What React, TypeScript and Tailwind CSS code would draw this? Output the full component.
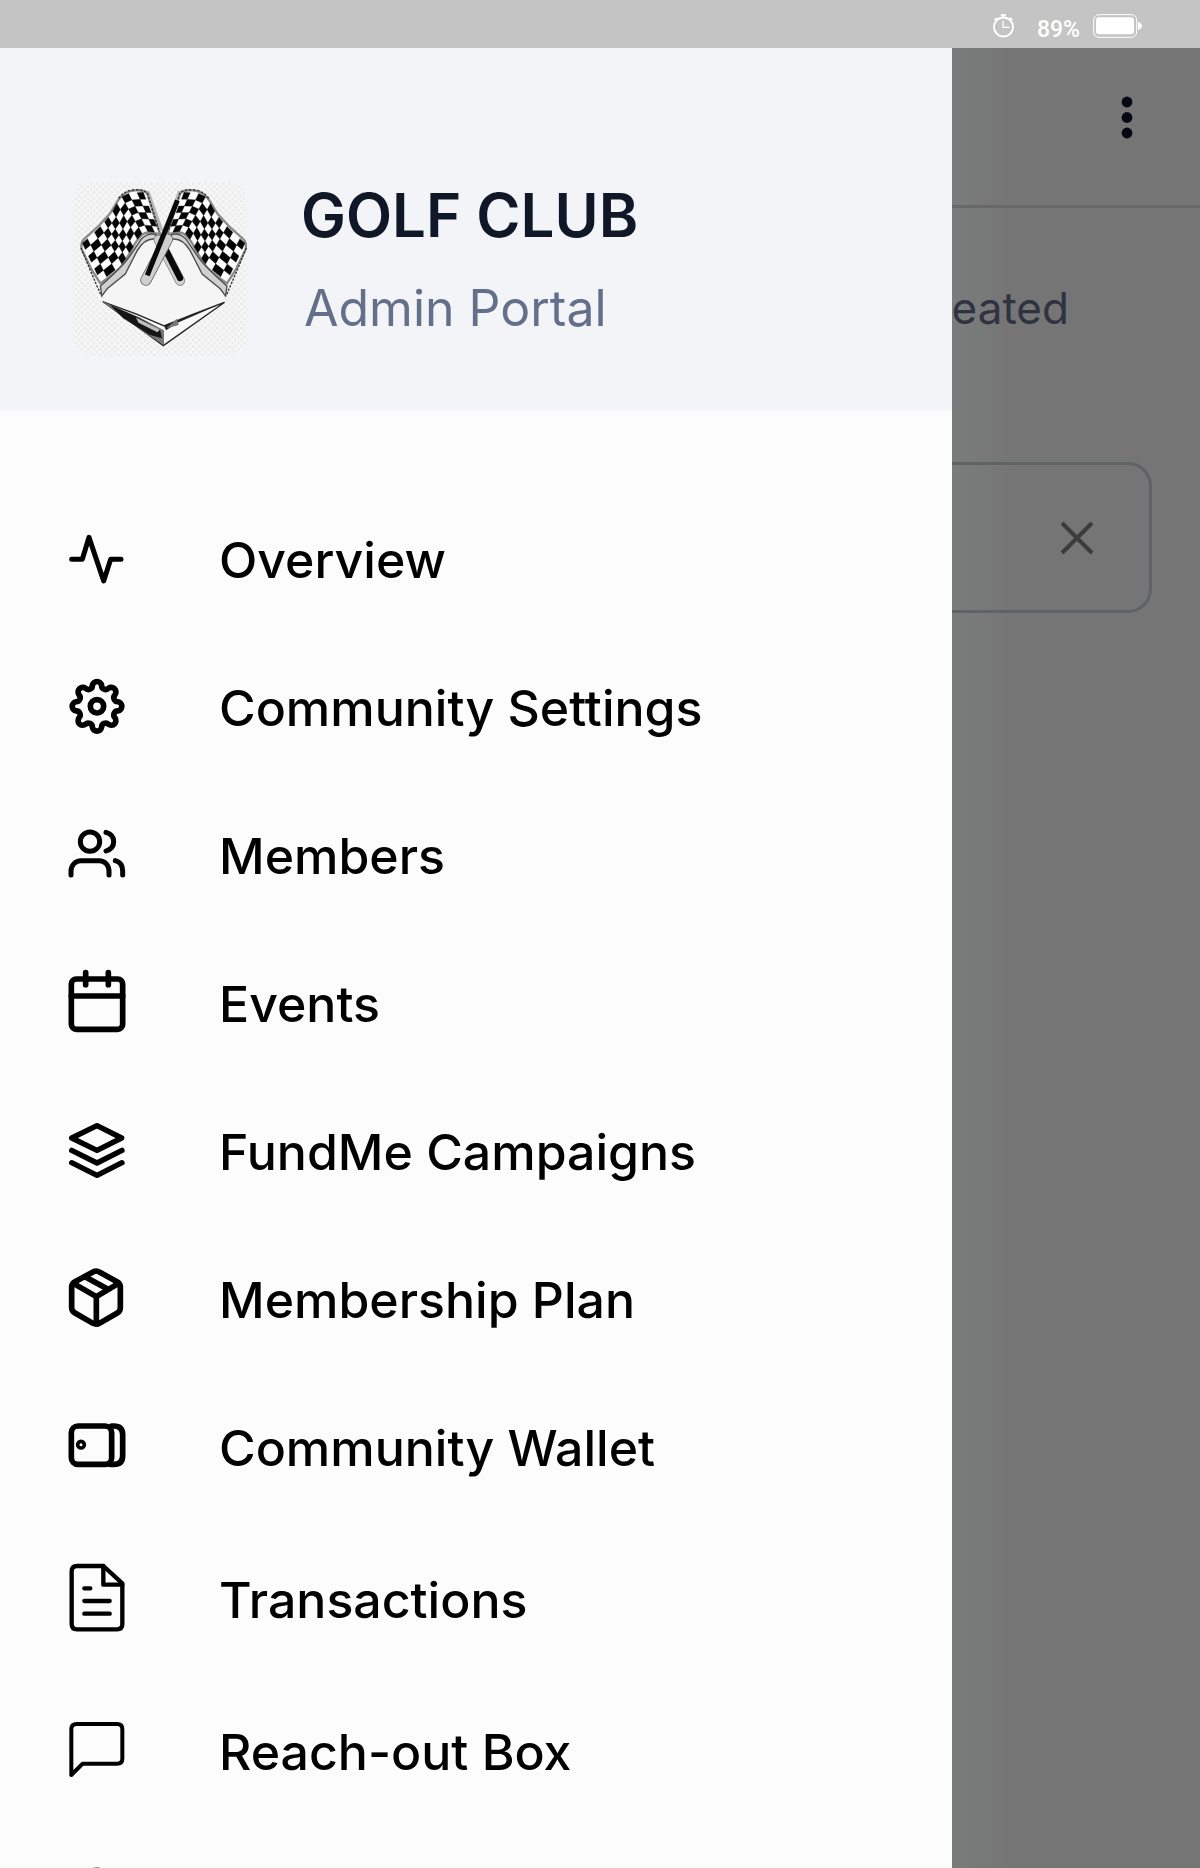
import React from "react";

const FONT = "font-['Inter',sans-serif]";

function MenuIcon({ top, children }: { top: number; children: React.ReactNode }) {
  return (
    <svg
      viewBox={`50 ${top} 180 228`}
      className="h-[76px] w-[60px] shrink-0"
      fill="none"
      stroke="currentColor"
      strokeWidth={17}
      strokeLinecap="round"
      strokeLinejoin="round"
      aria-hidden="true"
    >
      {children}
    </svg>
  );
}

function gearPath() {
  const cx = 140;
  const cy = 559;
  const pt = (deg: number) => {
    const a = (deg * Math.PI) / 180;
    return `${(cx + 64 * Math.cos(a)).toFixed(2)} ${(cy + 64 * Math.sin(a)).toFixed(2)}`;
  };
  let d = `M${pt(-12.5)}`;
  for (let k = 0; k < 8; k++) {
    d += `A14 14 0 0 1 ${pt(k * 45 + 12.5)}A12 12 0 0 0 ${pt(k * 45 + 32.5)}`;
  }
  return d + "Z";
}

const ICONS = {
  overview: (
    <MenuIcon top={6}>
      <path strokeWidth={15} d="M64 118H96L116 52L160 183L181 118H212" />
    </MenuIcon>
  ),
  settings: (
    <MenuIcon top={450}>
      <path d={gearPath()} />
      <circle cx="140" cy="559" r="20" />
    </MenuIcon>
  ),
  members: (
    <MenuIcon top={24}>
      <g strokeWidth={15}>
        <circle cx="119" cy="95" r="29" />
        <path d="M167 67C182 71 190 82 190 95S182 118 167 123" />
        <path d="M62 195V184C62 165 76 152 92 152H146C163 152 176 165 176 184V195" />
        <path d="M195 152C209 156 217 168 217 183V195" />
      </g>
    </MenuIcon>
  ),
  events: (
    <MenuIcon top={468}>
      <rect x="63" y="507" width="154" height="151" rx="15" />
      <path d="M63 558H217M106 488V524M174 488V524" />
    </MenuIcon>
  ),
  layers: (
    <MenuIcon top={42}>
      <g strokeWidth={16}>
        <path d="M140 77L214 114L140 151L64 114Z" />
        <path d="M64 151L140 189L215 151" />
        <path d="M64 188L140 226L215 188" />
      </g>
    </MenuIcon>
  ),
  box: (
    <MenuIcon top={486}>
      <path d="M128 516Q138 510 147 516L200 545Q210 551 210 561V623Q210 633 201 639L147 670Q138 675 128 670L74 639Q64 633 64 623V561Q64 551 74 545Z" />
      <path d="M69 550L138 590L205 550M138 590V670M104 530L173 568" />
    </MenuIcon>
  ),
  wallet: (
    <MenuIcon top={30}>
      <rect x="63" y="78" width="121" height="115" rx="20" />
      <path d="M184 78H190Q217 78 217 104V167Q217 193 190 193H180" />
      <circle cx="92" cy="134" r="10" strokeWidth={11} />
    </MenuIcon>
  ),
  transactions: (
    <MenuIcon top={486}>
      <g strokeWidth={13}>
        <path d="M80 498H159L216 550V672Q216 688 200 688H80Q64 688 64 672V514Q64 498 80 498Z" />
        <path d="M159 498V554H216" />
        <path d="M102 565H120M102 603H178M102 641H178" />
      </g>
    </MenuIcon>
  ),
  chat: (
    <MenuIcon top={42}>
      <path
        strokeWidth={12}
        d="M63 225V87Q63 72 79 72H200Q216 72 216 87V176Q216 191 200 191H97Z"
      />
    </MenuIcon>
  ),
};

const PRIMARY = [
  { label: "Overview", icon: ICONS.overview },
  { label: "Community Settings", icon: ICONS.settings },
  { label: "Members", icon: ICONS.members },
  { label: "Events", icon: ICONS.events },
  { label: "FundMe Campaigns", icon: ICONS.layers },
  { label: "Membership Plan", icon: ICONS.box },
  { label: "Community Wallet", icon: ICONS.wallet },
];

const SECONDARY = [
  { label: "Transactions", icon: ICONS.transactions },
  { label: "Reach-out Box", icon: ICONS.chat },
];

type Pt = [number, number];

function curve(points: Pt[], t: number): Pt {
  const n = points.length - 1;
  const x = Math.min(t * n, n - 0.0001);
  const i = Math.floor(x);
  const f = x - i;
  const p0 = points[Math.max(i - 1, 0)];
  const p1 = points[i];
  const p2 = points[i + 1];
  const p3 = points[Math.min(i + 2, n)];
  const at = (k: 0 | 1) =>
    0.5 *
    (2 * p1[k] +
      (p2[k] - p0[k]) * f +
      (2 * p0[k] - 5 * p1[k] + 4 * p2[k] - p3[k]) * f * f +
      (3 * p1[k] - p0[k] - 3 * p2[k] + p3[k]) * f * f * f);
  return [at(0), at(1)];
}

const UPPER: Pt[] = [[250, 66], [190, 76], [152, 132], [118, 172], [68, 218]];
const LOWER: Pt[] = [[298, 188], [250, 186], [214, 238], [182, 284], [122, 332]];

function cell(u: number, v: number): string {
  const a = curve(UPPER, u);
  const b = curve(LOWER, u);
  return `${(a[0] + (b[0] - a[0]) * v).toFixed(1)} ${(a[1] + (b[1] - a[1]) * v).toFixed(1)}`;
}

function checkers() {
  const cols = 11;
  const rows = 6;
  let d = "";
  for (let i = 0; i < cols; i++) {
    for (let j = 0; j < rows; j++) {
      if ((i + j) % 2) continue;
      const u0 = i / cols;
      const u1 = (i + 1) / cols;
      const v0 = j / rows;
      const v1 = (j + 1) / rows;
      d += `M${cell(u0, v0)}L${cell(u1, v0)}L${cell(u1, v1)}L${cell(u0, v1)}Z`;
    }
  }
  return d;
}

function Flag() {
  const outline =
    "M300 190L262 70Q254 58 225 60Q194 62 176 88L150 130L118 165L74 205Q62 216 66 236L96 298L122 338Q176 300 190 280L214 240Q240 188 262 186Z";
  return (
    <g>
      <path d="M264 62L306 180" stroke="#b5b5b5" strokeWidth="8" />
      <path d={outline} fill="#fff" stroke="#8a8a8a" strokeWidth="7" />
      <path d={checkers()} fill="#050505" stroke="#050505" strokeWidth="1" strokeLinejoin="round" />
      <path d="M176 84Q194 60 225 58Q254 58 262 68L298 184" fill="none" stroke="#333" strokeWidth="4" strokeDasharray="7 5" />
      <path
        d="M288 192Q262 186 244 206L206 262Q186 290 122 346L126 376L142 354L196 310L232 240Q256 200 288 206Z"
        fill="#d0d0d0"
        stroke="#4c4c4c"
        strokeWidth="4"
      />
      <path d="M64 232L92 300L124 374" fill="none" stroke="#333" strokeWidth="4" strokeDasharray="7 4" />
    </g>
  );
}

function ClubLogo() {
  return (
    <svg viewBox="40 35 520 520" className="size-[174px] shrink-0" role="img" aria-label="Golf Club logo">
      <defs>
        <pattern id="dots" width="18" height="18" patternUnits="userSpaceOnUse">
          <rect width="18" height="18" fill="#f6f6f6" />
          <rect width="7" height="7" fill="#e9e9e9" />
          <rect x="9" y="9" width="7" height="7" fill="#e9e9e9" />
        </pattern>
      </defs>
      <rect x="40" y="35" width="520" height="520" rx="56" fill="url(#dots)" />
      <path d="M128 342L200 310L262 190H362L420 300L494 345L490 390L314 470L135 392Z" fill="#f5f5f5" />
      <Flag />
      <g transform="translate(622 0) scale(-1 1)">
        <Flag />
      </g>
      <g fill="none" strokeLinecap="round">
        <path d="M296 208L360 330" stroke="#777" strokeWidth="30" />
        <path d="M296 208L360 330" stroke="#cfcfcf" strokeWidth="26" />
        <path d="M318 240L360 322" stroke="#0a0a0a" strokeWidth="19" />
        <path d="M322 206L258 328" stroke="#666" strokeWidth="34" />
        <path d="M322 206L258 328" stroke="#cfcfcf" strokeWidth="29" />
        <path d="M352 90L262 314" stroke="#0a0a0a" strokeWidth="15" strokeLinecap="butt" />
      </g>
      <path d="M130 393L230 430L312 465L400 430L492 395L310 524Z" fill="#f8f8f8" stroke="#222" strokeWidth="4" strokeLinejoin="round" />
      <path d="M130 393L240 440L312 478V522L240 476Z" fill="#777" />
      <path d="M150 402L235 440L300 476L306 502L270 492L190 442Z" fill="#151515" />
      <path d="M228 440L300 476L292 484L236 456Z" fill="#bdbdbd" />
      <path d="M492 395L356 454L318 478L312 464Z" fill="#222" />
      <path d="M350 444L320 472L356 462Z" fill="#777" />
    </svg>
  );
}

function StatusBar() {
  return (
    <div className="flex h-12 shrink-0 items-center justify-end bg-[#c4c4c4] pt-1 pr-14 text-white">
      <svg viewBox="156 36 70 78" className="mr-[22px] h-[26px] w-[23px]" fill="none" stroke="currentColor" aria-label="Alarm set">
        <circle cx="191" cy="78" r="29" strokeWidth="6" />
        <path d="M190 60V79H210" strokeWidth="4" />
        <path d="M183 42H198M190 42V50M164 57L173 51M209 51L218 57" strokeWidth="7" />
      </svg>
      <span className="mr-3 pt-2 font-['Roboto',sans-serif] text-[23px] leading-6 font-medium">89%</span>
      <svg viewBox="456 42 156 78" className="h-[26px] w-[52px]" fill="none" aria-label="Battery">
        <rect x="461" y="47" width="129" height="68" rx="16" stroke="#fff" strokeWidth="3" />
        <rect x="468" y="55" width="114" height="51" rx="9" fill="#fff" />
        <path d="M594 69Q606 73 606 81Q606 89 594 93Z" fill="#fff" />
      </svg>
    </div>
  );
}

function MenuRow({ label, icon, height }: { label: string; icon: React.ReactNode; height: string }) {
  return (
    <li>
      <a href="#" className={`flex w-full items-center gap-[92px] pl-[67px] ${height}`}>
        {icon}
        <span className="text-[50px] leading-[60px] font-medium whitespace-nowrap">{label}</span>
      </a>
    </li>
  );
}

export default function App() {
  return (
    <div className={`flex h-screen flex-col overflow-hidden bg-[#757575] ${FONT}`}>
      <StatusBar />
      <div className="flex min-h-0 flex-1">
        <aside className="flex w-[79.3%] shrink-0 flex-col overflow-hidden bg-[#fcfcfc] text-black">
          <header className="flex h-[362px] shrink-0 items-start gap-[54px] bg-[#f2f4f8] pt-[134px] pl-[73px]">
            <ClubLogo />
            <div className="whitespace-nowrap">
              <h1 className="text-[60px] leading-[66px] font-semibold text-[#101726]">GOLF CLUB</h1>
              <p className="mt-[30px] pl-[3px] text-[50px] leading-[60px] text-[#64708a]">Admin Portal</p>
            </div>
          </header>
          <nav className="pt-[76px]" aria-label="Main menu">
            <ul>
              {PRIMARY.map((item) => (
                <MenuRow key={item.label} {...item} height="h-[148px]" />
              ))}
            </ul>
            <ul className="mt-[2px]">
              {SECONDARY.map((item) => (
                <MenuRow key={item.label} {...item} height="h-[152px]" />
              ))}
              <li>
                <a href="#" aria-label="Notifications" className="flex h-[152px] items-start pt-[39px] pl-[67px]">
                  <svg viewBox="0 0 60 76" className="h-[76px] w-[60px]" fill="none" stroke="#999" strokeWidth="2" aria-hidden="true">
                    <circle cx="30" cy="8" r="7" />
                  </svg>
                </a>
              </li>
            </ul>
          </nav>
        </aside>
        <main className="min-w-0 flex-1 bg-linear-to-r from-[#7a7c7b] to-[#757575] to-[60px]">
          <div className="flex h-[160px] items-start justify-end border-b-3 border-[#686869] pt-12 pr-[61px] text-[#040911]">
            <button type="button" aria-label="More options">
              <svg viewBox="0 0 24 44" className="h-11 w-6" fill="currentColor">
                <circle cx="12" cy="6" r="5.4" />
                <circle cx="12" cy="21.5" r="5.4" />
                <circle cx="12" cy="37" r="5.4" />
              </svg>
            </button>
          </div>
          <p className="pt-[73px] text-[44px] leading-[54px] text-[#2f3340]">eated</p>
          <div className="mt-[127px] mr-12 flex h-[151px] items-center justify-end rounded-r-[24px] border-y-3 border-r-3 border-[#5e6366] pr-[55px]">
            <button type="button" aria-label="Clear" className="text-[#3c3c3c]">
              <svg viewBox="0 0 34 34" className="size-[34px]" fill="none" stroke="currentColor" strokeWidth="4">
                <path d="M2 2L32 32M32 2L2 32" />
              </svg>
            </button>
          </div>
        </main>
      </div>
    </div>
  );
}
